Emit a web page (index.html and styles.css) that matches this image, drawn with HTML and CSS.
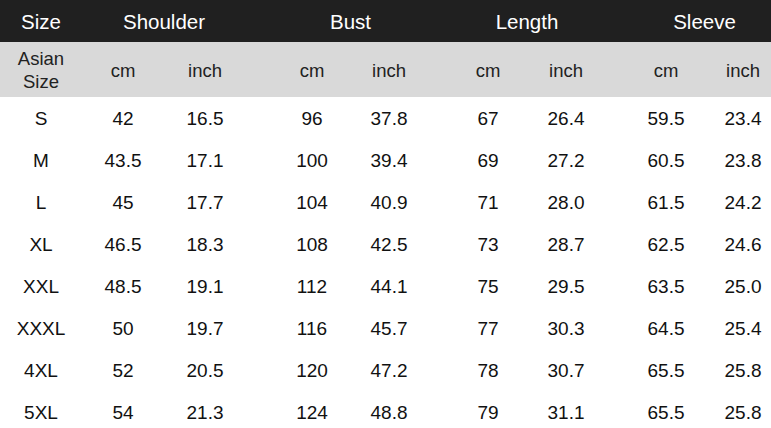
FILE: index.html
```html
<!DOCTYPE html>
<html>
<head>
<meta charset="utf-8">
<link rel="stylesheet" href="styles.css">
</head>
<body>
<div class="chart">
  <div class="row head">
    <div class="cell">Size</div>
    <div class="grp g1"><div class="span">Shoulder</div></div>
    <div class="grp g2"><div class="span">Bust</div></div>
    <div class="grp g3"><div class="span">Length</div></div>
    <div class="grp g4"><div class="span">Sleeve</div></div>
  </div>
  <div class="row sub">
    <div class="cell">Asian<br>Size</div>
    <div class="grp g1"><div class="cell">cm</div><div class="cell">inch</div></div>
    <div class="grp g2"><div class="cell">cm</div><div class="cell">inch</div></div>
    <div class="grp g3"><div class="cell">cm</div><div class="cell">inch</div></div>
    <div class="grp g4"><div class="cell">cm</div><div class="cell">inch</div></div>
  </div>
  <div class="row data">
    <div class="cell">S</div>
    <div class="grp g1"><div class="cell">42</div><div class="cell">16.5</div></div>
    <div class="grp g2"><div class="cell">96</div><div class="cell">37.8</div></div>
    <div class="grp g3"><div class="cell">67</div><div class="cell">26.4</div></div>
    <div class="grp g4"><div class="cell">59.5</div><div class="cell">23.4</div></div>
  </div>
  <div class="row data">
    <div class="cell">M</div>
    <div class="grp g1"><div class="cell">43.5</div><div class="cell">17.1</div></div>
    <div class="grp g2"><div class="cell">100</div><div class="cell">39.4</div></div>
    <div class="grp g3"><div class="cell">69</div><div class="cell">27.2</div></div>
    <div class="grp g4"><div class="cell">60.5</div><div class="cell">23.8</div></div>
  </div>
  <div class="row data">
    <div class="cell">L</div>
    <div class="grp g1"><div class="cell">45</div><div class="cell">17.7</div></div>
    <div class="grp g2"><div class="cell">104</div><div class="cell">40.9</div></div>
    <div class="grp g3"><div class="cell">71</div><div class="cell">28.0</div></div>
    <div class="grp g4"><div class="cell">61.5</div><div class="cell">24.2</div></div>
  </div>
  <div class="row data">
    <div class="cell">XL</div>
    <div class="grp g1"><div class="cell">46.5</div><div class="cell">18.3</div></div>
    <div class="grp g2"><div class="cell">108</div><div class="cell">42.5</div></div>
    <div class="grp g3"><div class="cell">73</div><div class="cell">28.7</div></div>
    <div class="grp g4"><div class="cell">62.5</div><div class="cell">24.6</div></div>
  </div>
  <div class="row data">
    <div class="cell">XXL</div>
    <div class="grp g1"><div class="cell">48.5</div><div class="cell">19.1</div></div>
    <div class="grp g2"><div class="cell">112</div><div class="cell">44.1</div></div>
    <div class="grp g3"><div class="cell">75</div><div class="cell">29.5</div></div>
    <div class="grp g4"><div class="cell">63.5</div><div class="cell">25.0</div></div>
  </div>
  <div class="row data">
    <div class="cell">XXXL</div>
    <div class="grp g1"><div class="cell">50</div><div class="cell">19.7</div></div>
    <div class="grp g2"><div class="cell">116</div><div class="cell">45.7</div></div>
    <div class="grp g3"><div class="cell">77</div><div class="cell">30.3</div></div>
    <div class="grp g4"><div class="cell">64.5</div><div class="cell">25.4</div></div>
  </div>
  <div class="row data">
    <div class="cell">4XL</div>
    <div class="grp g1"><div class="cell">52</div><div class="cell">20.5</div></div>
    <div class="grp g2"><div class="cell">120</div><div class="cell">47.2</div></div>
    <div class="grp g3"><div class="cell">78</div><div class="cell">30.7</div></div>
    <div class="grp g4"><div class="cell">65.5</div><div class="cell">25.8</div></div>
  </div>
  <div class="row data">
    <div class="cell">5XL</div>
    <div class="grp g1"><div class="cell">54</div><div class="cell">21.3</div></div>
    <div class="grp g2"><div class="cell">124</div><div class="cell">48.8</div></div>
    <div class="grp g3"><div class="cell">79</div><div class="cell">31.1</div></div>
    <div class="grp g4"><div class="cell">65.5</div><div class="cell">25.8</div></div>
  </div>
</div>
</body>
</html>
```
FILE: styles.css
```css
html, body {
  margin: 0;
  padding: 0;
  background: #fff;
  overflow: hidden;
}
body {
  width: 771px;
  height: 428px;
  font-family: "Liberation Sans", Arial, sans-serif;
  color: #111;
}
.chart {
  width: 781.5px;
}
.row {
  display: grid;
  grid-template-columns: 82px 164px 181.5px 177.5px 176.5px;
  box-sizing: border-box;
}
.grp {
  display: grid;
  grid-template-columns: 1fr 1fr;
}
.g2 { padding-left: 27.5px; }
.g3 { padding-left: 21.5px; }
.g4 { padding-left: 22.5px; }
.cell, .span {
  display: flex;
  align-items: center;
  justify-content: center;
  text-align: center;
}
.span {
  grid-column: 1 / 3;
}
.head {
  height: 42px;
  padding-top: 2px;
  background: #202020;
  color: #fff;
  font-size: 20.5px;
}
.sub {
  height: 55px;
  padding-top: 1px;
  background: #d9d9d9;
  color: #222;
  font-size: 18.5px;
  line-height: 23px;
}
.data {
  height: 42px;
  padding-top: 2px;
  font-size: 19px;
  color: #111;
}
```
